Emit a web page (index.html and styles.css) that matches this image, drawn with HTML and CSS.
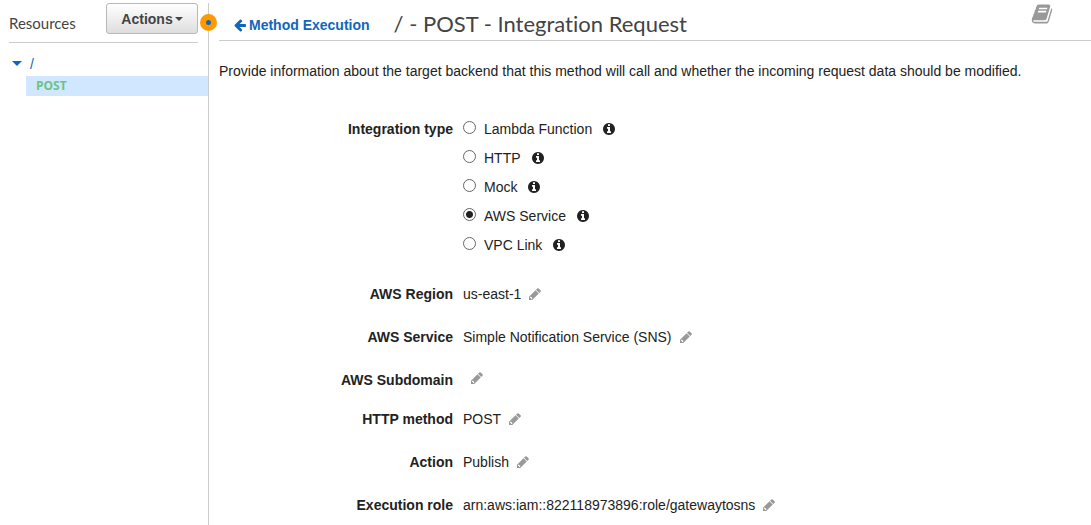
FILE: index.html
```html
<!DOCTYPE html>
<html lang="en">
<head>
<meta charset="utf-8">
<title>Integration Request</title>
<link rel="stylesheet" href="styles.css">
</head>
<body>
<svg class="sprite" aria-hidden="true">
  <symbol id="pencil" viewBox="0 0 1792 1792"><path d="M491 1536l91-91-235-235-91 91v107h128v128h107zm469-1120l416 416-832 832h-416v-416zm683 96q0 53-37 90l-166 166-416-416 166-165q36-38 90-38 53 0 91 38l235 234q37 39 37 91z"/></symbol>
  <symbol id="info" viewBox="0 0 1792 1792"><path d="M1152 1376v-160q0-14-9-23t-23-9h-96v-512q0-14-9-23t-23-9h-320q-14 0-23 9t-9 23v160q0 14 9 23t23 9h96v320h-96q-14 0-23 9t-9 23v160q0 14 9 23t23 9h448q14 0 23-9t9-23zm-128-896v-160q0-14-9-23t-23-9h-192q-14 0-23 9t-9 23v160q0 14 9 23t23 9h192q14 0 23-9t9-23zm640 416q0 209-103 385.5t-279.5 279.5-385.5 103-385.5-103-279.5-279.5-103-385.5 103-385.5 279.5-279.5 385.5-103 385.5 103 279.5 279.5 103 385.5z"/></symbol>
</svg>
<div class="app">
  <aside class="sidebar">
    <div class="sidebar-head">
      <h2 class="sidebar-title">Resources</h2>
      <button class="actions" type="button">Actions<span class="caret"></span></button>
    </div>
    <nav class="tree">
      <a class="tree-root" href="#"><span class="toggle"></span>/</a>
      <a class="tree-method" href="#">POST</a>
    </nav>
    <span class="handle"></span>
  </aside>
  <main class="main">
    <header class="head">
      <a class="back" href="#"><svg class="arrow" viewBox="0 0 1792 1792" aria-hidden="true"><path d="M1664 896v128q0 53-32.5 90.5t-84.5 37.5h-704l293 294q38 36 38 90t-38 90l-75 76q-37 37-90 37-52 0-91-37l-651-652q-37-37-37-90 0-52 37-91l651-650q38-38 91-38 52 0 90 38l75 74q38 38 38 91t-38 91l-293 293h704q52 0 84.5 37.5t32.5 90.5z"/></svg>Method Execution</a>
      <h1 class="title">/ - POST - Integration Request</h1>
      <button class="docs" type="button" aria-label="Documentation"><svg class="book" viewBox="0 0 1792 1792" aria-hidden="true"><path d="M1703 478q40 57 18 129l-275 906q-19 64-76.5 107.5t-122.5 43.5h-923q-77 0-148.5-53.5t-99.5-131.5q-24-67-2-127 0-4 3-27t4-37q1-8-3-21.5t-3-19.5q2-11 8-21t16.5-23.5 16.5-23.5q23-38 45-91.5t30-91.5q3-10 .5-30t-.5-28q3-11 17-28t17-23q21-36 42-92t25-90q1-9-2.5-32t.5-28q4-13 22-30.5t22-22.5q19-26 42.5-84.5t27.5-96.5q1-8-3-25.5t-2-26.5q2-8 9-18t18-23 17-21q8-12 16.5-30.5t15-35 16-36 19.5-32 26.5-23.5 36-11.5 47.5 5.5l-1 3q38-9 51-9h761q74 0 114 56t18 130l-274 906q-36 119-71.5 153.5t-128.5 34.5h-869q-27 0-38 15-11 16-1 43 24 70 144 70h923q29 0 56-15.5t35-41.5l300-987q7-22 5-57 38 15 59 43zm-1064 2q-4 13 2 22.5t20 9.5h608q13 0 25.5-9.5t16.5-22.5l21-64q4-13-2-22.5t-20-9.5h-608q-13 0-25.5 9.5t-16.5 22.5zm-83 256q-4 13 2 22.5t20 9.5h608q13 0 25.5-9.5t16.5-22.5l21-64q4-13-2-22.5t-20-9.5h-608q-13 0-25.5 9.5t-16.5 22.5z"/></svg></button>
    </header>
    <p class="intro">Provide information about the target backend that this method will call and whether the incoming request data should be modified.</p>
    <form class="form">
      <div class="row types" role="radiogroup" aria-labelledby="type-label">
        <span class="name" id="type-label">Integration type</span>
        <div class="options">
          <div class="option"><input class="radio" type="radio" name="type" id="t1"><label for="t1">Lambda Function</label><svg class="info" aria-hidden="true"><use href="#info"/></svg></div>
          <div class="option"><input class="radio" type="radio" name="type" id="t2"><label for="t2">HTTP</label><svg class="info" aria-hidden="true"><use href="#info"/></svg></div>
          <div class="option"><input class="radio" type="radio" name="type" id="t3"><label for="t3">Mock</label><svg class="info" aria-hidden="true"><use href="#info"/></svg></div>
          <div class="option"><input class="radio" type="radio" name="type" id="t4" checked><label for="t4">AWS Service</label><svg class="info" aria-hidden="true"><use href="#info"/></svg></div>
          <div class="option"><input class="radio" type="radio" name="type" id="t5"><label for="t5">VPC Link</label><svg class="info" aria-hidden="true"><use href="#info"/></svg></div>
        </div>
      </div>
      <div class="row"><span class="name">AWS Region</span><span class="value">us-east-1</span><button class="edit" type="button" aria-label="Edit AWS Region"><svg class="pencil"><use href="#pencil"/></svg></button></div>
      <div class="row"><span class="name">AWS Service</span><span class="value">Simple Notification Service (SNS)</span><button class="edit" type="button" aria-label="Edit AWS Service"><svg class="pencil"><use href="#pencil"/></svg></button></div>
      <div class="row row-empty"><span class="name">AWS Subdomain</span><span class="value"></span><button class="edit" type="button" aria-label="Edit AWS Subdomain"><svg class="pencil"><use href="#pencil"/></svg></button></div>
      <div class="row"><span class="name">HTTP method</span><span class="value">POST</span><button class="edit" type="button" aria-label="Edit HTTP method"><svg class="pencil"><use href="#pencil"/></svg></button></div>
      <div class="row"><span class="name">Action</span><span class="value">Publish</span><button class="edit" type="button" aria-label="Edit Action"><svg class="pencil"><use href="#pencil"/></svg></button></div>
      <div class="row"><span class="name">Execution role</span><span class="value">arn:aws:iam::822118973896:role/gatewaytosns</span><button class="edit" type="button" aria-label="Edit Execution role"><svg class="pencil"><use href="#pencil"/></svg></button></div>
    </form>
  </main>
</div>
</body>
</html>
```
FILE: styles.css
```css
* { box-sizing: border-box; }
body {
  margin: 0;
  background: #fff;
  color: #222;
  font: 14px/20px "Liberation Sans", Arial, sans-serif;
}
a { text-decoration: none; }
button { font: inherit; cursor: pointer; }
.sprite { display: none; }
.app {
  display: flex;
  min-height: 100vh;
  padding-top: 3px;
}
.sidebar {
  position: relative;
  flex: none;
  width: 209px;
  border-right: 1px solid #ccc;
}
.sidebar-head {
  display: flex;
  align-items: flex-start;
  justify-content: space-between;
  height: 40px;
  margin: 0 10px 0 9px;
  border-bottom: 1px solid #ccc;
}
.sidebar-title {
  margin: 10px 0 0;
  color: #444;
  font: 400 15px/20px Lato, sans-serif;
}
.actions {
  display: flex;
  align-items: center;
  justify-content: center;
  width: 92px;
  height: 31px;
  padding: 0;
  border: 1px solid #b8b8b8;
  border-radius: 3px;
  background: linear-gradient(#fff, #dedede);
  color: #444;
  font-weight: 700;
}
.caret {
  margin-left: 2px;
  border: 4px solid transparent;
  border-top-color: #444;
  border-bottom: 0;
}
.tree { padding-top: 10px; }
.tree-root {
  display: flex;
  align-items: center;
  gap: 8px;
  height: 23px;
  padding: 0 0 2px 12px;
  color: #1166bb;
}
.toggle {
  border: 5px solid transparent;
  border-top-color: #1166bb;
  border-bottom: 0;
}
.tree-method {
  display: block;
  height: 20px;
  margin-left: 26px;
  padding-left: 10px;
  background: #d1e7ff;
  color: #6bc288;
  font: 700 12px/20px "Open Sans", sans-serif;
}
.handle {
  position: absolute;
  top: 11px;
  right: -9px;
  width: 17px;
  height: 17px;
  border: 6px solid #f90;
  border-radius: 50%;
  background: #1166bb;
}
.main {
  flex: 1;
  min-width: 0;
  padding-left: 10px;
}
.head {
  display: flex;
  align-items: flex-start;
  height: 38px;
  padding: 0 38px 0 14px;
  border-bottom: 1px solid #ccc;
}
.back {
  display: flex;
  align-items: center;
  gap: 2px;
  margin-top: 12px;
  color: #1166bb;
  font-weight: 700;
}
.arrow {
  width: 14px;
  height: 14px;
  fill: currentColor;
}
.title {
  margin: 8px 0 0 24px;
  color: #444;
  font: 400 22px/26px Lato, sans-serif;
  font-variant-ligatures: none;
}
.docs {
  display: flex;
  margin-left: auto;
  padding: 0;
  border: 0;
  background: none;
  color: #999;
}
.book {
  width: 22px;
  height: 22px;
  fill: currentColor;
}
.intro { margin: 20px 0 38px; }
.form {
  display: grid;
  gap: 23px;
}
.row {
  display: flex;
  align-items: center;
  min-height: 20px;
}
.types {
  align-items: flex-start;
  margin-bottom: 6px;
}
.name {
  flex: none;
  width: 234px;
  margin-right: 10px;
  font-weight: 700;
  text-align: right;
}
.options {
  display: grid;
  gap: 9px;
}
.option {
  display: flex;
  align-items: center;
}
.radio {
  appearance: none;
  width: 13px;
  height: 13px;
  margin: 0 8px 3px 0;
  border: 1px solid #666;
  border-radius: 50%;
  background: #fff;
}
.radio:checked { background: radial-gradient(circle, #222 3px, #fff 4px); }
.info {
  width: 14px;
  height: 14px;
  margin-left: 10px;
  fill: #222;
}
.edit {
  display: flex;
  margin-left: 7px;
  padding: 0;
  border: 0;
  background: none;
}
.pencil {
  width: 14px;
  height: 14px;
  fill: #999;
}
.row-empty { margin-bottom: -4px; }
.row-empty .edit { margin-bottom: 4px; }
```
